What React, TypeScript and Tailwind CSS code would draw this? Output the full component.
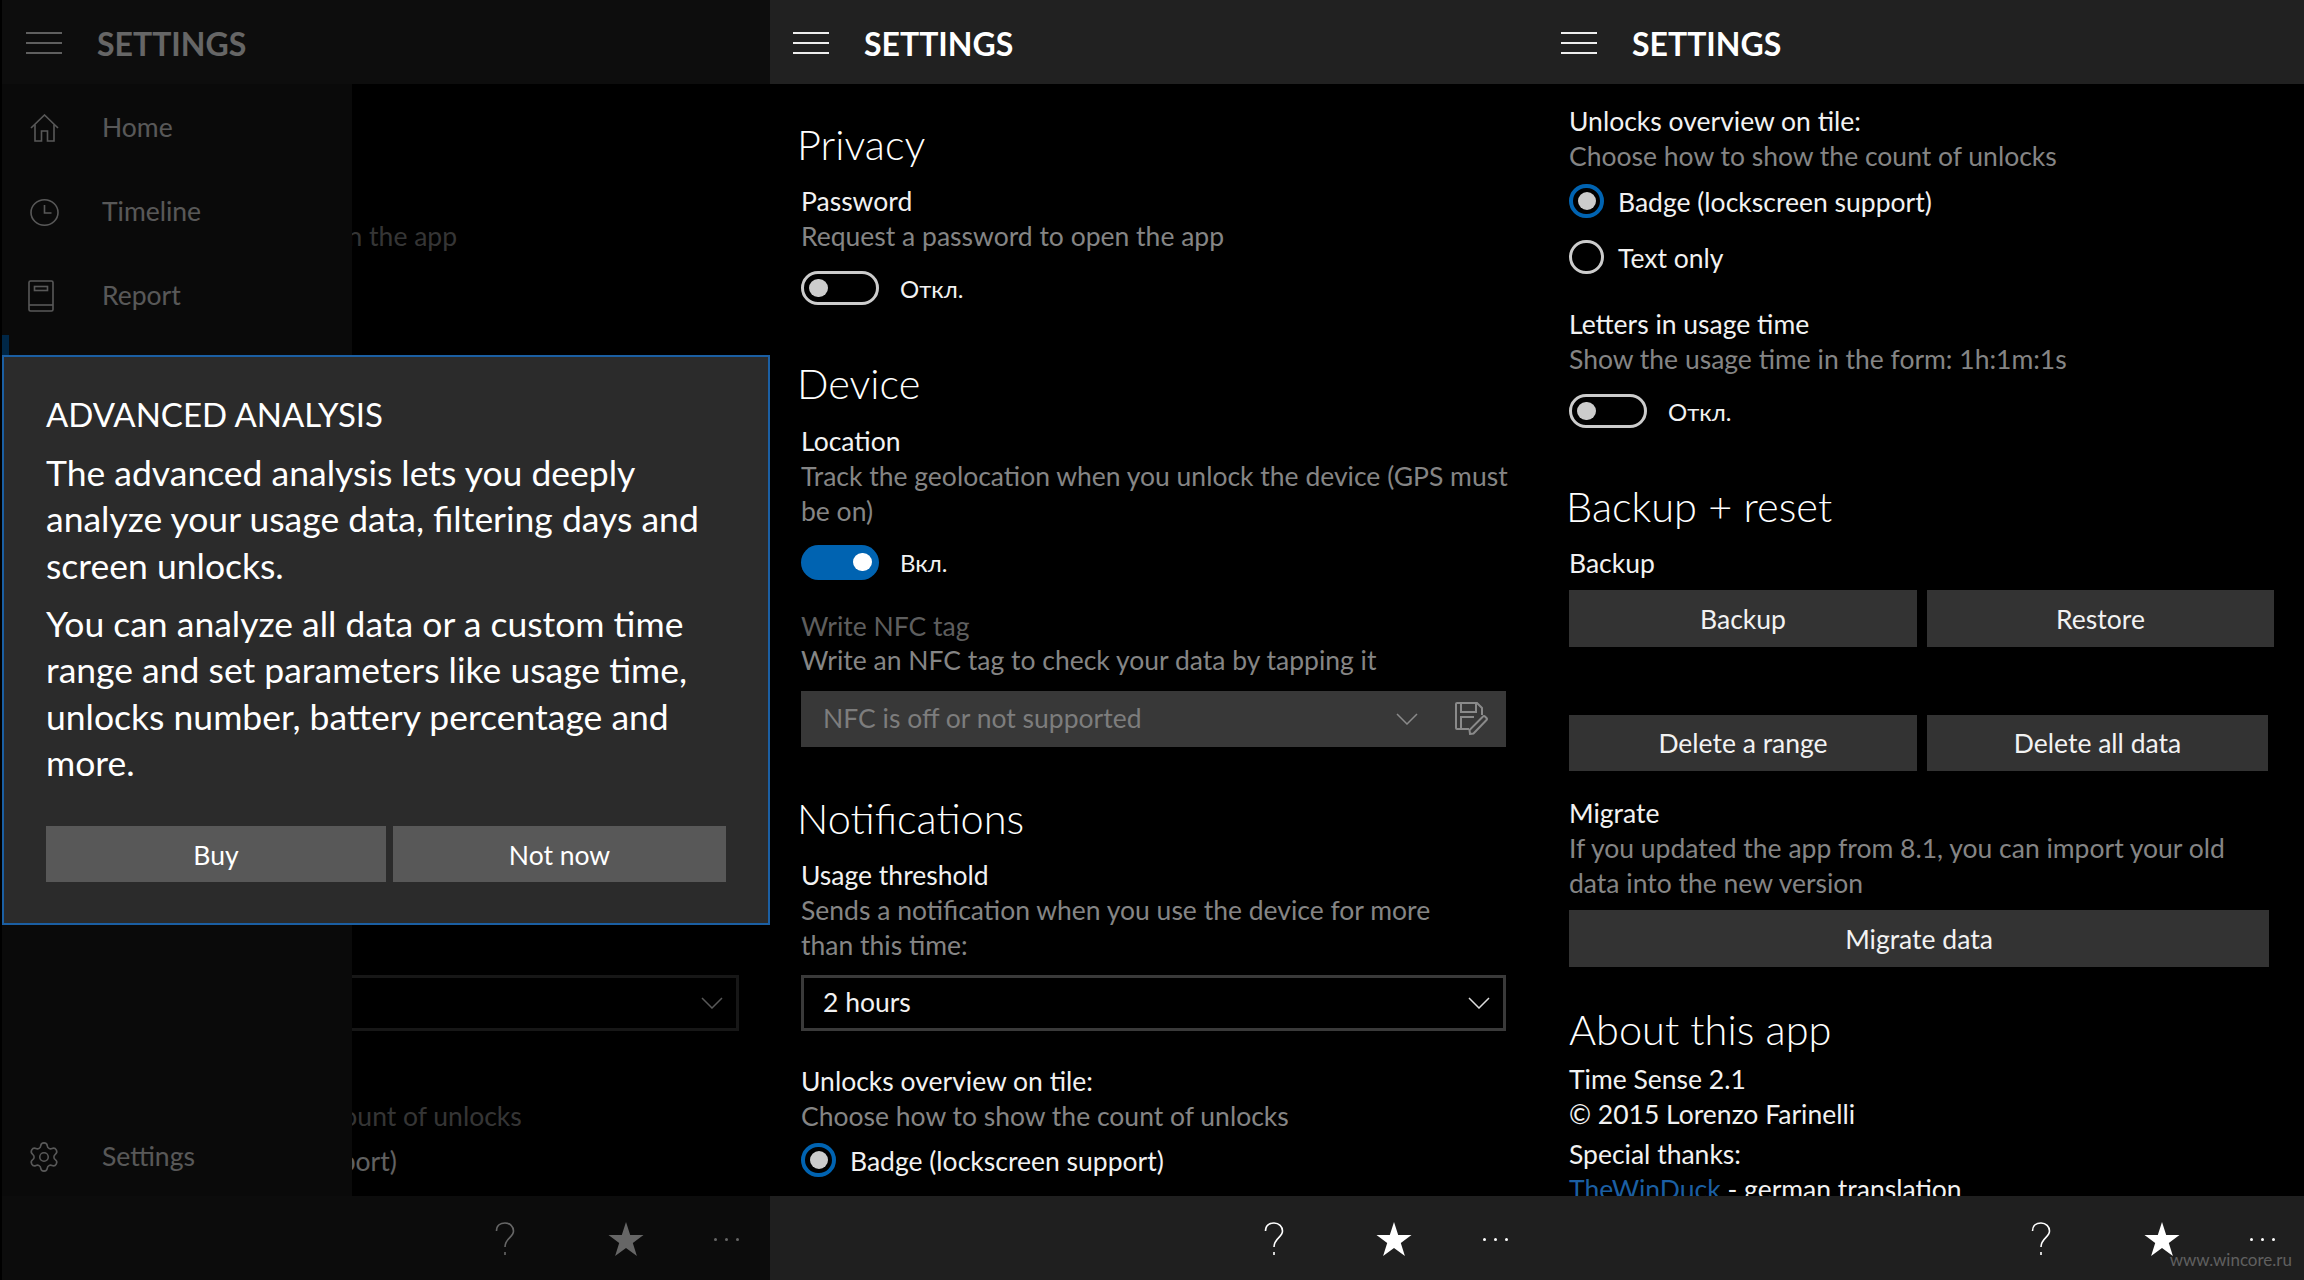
import React from "react";
import { Settings as Gear } from "lucide-react";

const Heading = ({ children, cls = "-ml-[4px]" }: { children: React.ReactNode; cls?: string }) => (
  <div className={`h-[50px] leading-[46px] text-[41.5px] font-light text-white whitespace-nowrap ${cls}`}>{children}</div>
);
const Label = ({ children, cls = "text-[#f2f2f2]" }: { children: React.ReactNode; cls?: string }) => (
  <div className={`h-[35px] leading-[35px] text-[26.5px] whitespace-nowrap ${cls}`}>{children}</div>
);
const Desc = ({ children }: { children: React.ReactNode }) => (
  <div className="h-[35px] leading-[35px] text-[26.5px] text-[#858585] whitespace-nowrap">{children}</div>
);

const Toggle = ({ on, cls }: { on?: boolean; cls: string }) => (
  <div className={`flex items-center gap-[21px] h-[34px] ${cls}`}>
    {on ? (
      <div className="w-[78px] h-[35px] rounded-full bg-[#0063b1] flex items-center justify-end pr-[7px]">
        <div className="w-[19px] h-[18px] rounded-full bg-white" />
      </div>
    ) : (
      <div className="w-[78px] h-[34px] rounded-full border-[3px] border-[#cccccc] flex items-center pl-[5px]">
        <div className="w-[19px] h-[18px] rounded-full bg-[#cccccc]" />
      </div>
    )}
    <span className="mt-[2px] text-[24px] text-[#f2f2f2] leading-[34px]">{on ? "Вкл." : "Откл."}</span>
  </div>
);

const Radio = ({ on, label, cls }: { on?: boolean; label: string; cls: string }) => (
  <div className={`flex items-center gap-[14px] h-[34px] ${cls}`}>
    {on ? (
      <div className="w-[35px] h-[34px] rounded-full border-[4px] border-[#0063b1] flex items-center justify-center">
        <div className="w-[18px] h-[18px] rounded-full bg-[#cccccc]" />
      </div>
    ) : (
      <div className="w-[35px] h-[34px] rounded-full border-[3px] border-[#cccccc]" />
    )}
    <span className="mt-[2px] text-[26.5px] text-[#f2f2f2] leading-[34px] whitespace-nowrap">{label}</span>
  </div>
);

const Chevron = ({ color }: { color: string }) => (
  <svg width="22" height="12" viewBox="0 0 22 12" fill="none" stroke={color} strokeWidth="1.5">
    <path d="M1 1 L11 11 L21 1" />
  </svg>
);

const Btn = ({ children, cls }: { children: React.ReactNode; cls: string }) => (
  <div className={`flex items-center justify-center pt-[2px] bg-[#333333] text-[26.5px] text-[#f2f2f2] ${cls}`}>{children}</div>
);

const Header = ({ cls }: { cls: string }) => (
  <div className="h-[84px] shrink-0 bg-[#212121] flex items-center">
    <div className={`flex flex-col gap-[8px] mt-[2px] w-[36px] ${cls}`}>
      <div className="h-[2px] bg-[#eeeeee]" />
      <div className="h-[2px] bg-[#eeeeee]" />
      <div className="h-[2px] bg-[#eeeeee]" />
    </div>
    <div className="ml-[35px] mt-[3px] text-[32px] font-bold text-white leading-none">SETTINGS</div>
  </div>
);

const Question = () => (
  <svg width="20" height="34" viewBox="0 0 20 34" fill="none" stroke="white" strokeWidth="1.6">
    <path d="M1.5 9 C1.5 3.5 5.5 1 10 1 C15 1 18.5 4.5 18.5 9 C18.5 15.5 10 16 10 25 M10 30 V33" />
  </svg>
);

const Footer = ({ cls }: { cls: string }) => (
  <div className={`h-[84px] shrink-0 bg-[#1f1f1f] flex items-center ${cls}`}>
    <div className="w-[40px] flex justify-center mt-[2px]">
      <Question />
    </div>
    <div className="w-[50px] ml-[75.5px] flex justify-center mt-[2px]">
      <svg width="36" height="34" viewBox="0 0 36 34" fill="white">
        <polygon points="18,0 22.2,12.9 35.5,12.9 24.8,21 28.9,34 18,26 7.1,34 11.2,21 0.5,12.9 13.8,12.9" />
      </svg>
    </div>
    <div className="w-[40px] ml-[56px] flex justify-center gap-[8px] mt-[2px]">
      <div className="w-[3px] h-[3px] rounded-full bg-white" />
      <div className="w-[3px] h-[3px] rounded-full bg-white" />
      <div className="w-[3px] h-[3px] rounded-full bg-white" />
    </div>
  </div>
);

const PrivacyBody = ({ cls }: { cls: string }) => (
  <div className={`flex-1 overflow-hidden pt-[37px] ${cls}`}>
    <Heading>Privacy</Heading>
    <div className="mt-[13px]">
      <Label>Password</Label>
      <Desc>Request a password to open the app</Desc>
    </div>
    <Toggle cls="mt-[17px]" />
    <Heading cls="-ml-[4px] mt-[55px]">Device</Heading>
    <div className="mt-[14px]">
      <Label>Location</Label>
      <Desc>Track the geolocation when you unlock the device (GPS must</Desc>
      <Desc>be on)</Desc>
    </div>
    <Toggle on cls="mt-[16px]" />
    <div className="mt-[30px]">
      <Label cls="text-[#5e5e5e]">Write NFC tag</Label>
      <div className="-mt-[1px]">
        <Desc>Write an NFC tag to check your data by tapping it</Desc>
      </div>
    </div>
    <div className="mt-[13px] h-[56px] bg-[#383838] flex items-center pl-[22px]">
      <span className="text-[26.5px] text-[#7d7d7d] flex-1 whitespace-nowrap">NFC is off or not supported</span>
      <Chevron color="#8a8a8a" />
      <div className="w-[70px] h-[57px] -mt-[1px] flex items-center justify-center ml-[18px]">
        <svg width="33" height="33" viewBox="0 0 33 33" fill="none" stroke="#8a8a8a" strokeWidth="2">
          <path d="M14 27 H2 Q1 27 1 26 V2 Q1 1 2 1 H22 L27 6 V13" />
          <path d="M6 1 V10 H21 V1" />
          <path d="M6 27 V15 H19" />
          <path d="M15 32 L14.5 28 L28 14.5 Q29 13.5 30 14.5 L31.5 16 Q32.5 17 31.5 18 L18.5 31.5 Z" />
        </svg>
      </div>
    </div>
    <Heading cls="-ml-[4px] mt-[48px]">Notifications</Heading>
    <div className="mt-[13px]">
      <Label>Usage threshold</Label>
      <Desc>Sends a notification when you use the device for more</Desc>
      <Desc>than this time:</Desc>
    </div>
    <div className="mt-[12px] h-[56px] border-[3px] border-[#3a3a3a] flex items-center justify-between pl-[19px] pr-[13px]">
      <span className="text-[26.5px] text-[#f2f2f2]">2 hours</span>
      <Chevron color="#dddddd" />
    </div>
    <div className="mt-[33px]">
      <Label>Unlocks overview on tile:</Label>
      <Desc>Choose how to show the count of unlocks</Desc>
    </div>
    <Radio on label="Badge (lockscreen support)" cls="mt-[9px]" />
  </div>
);

const NavItem = ({ icon, label, cls }: { icon: React.ReactNode; label: string; cls: string }) => (
  <div className={`flex items-center h-[40px] ${cls}`}>
    <div className="w-[84px] flex justify-center">{icon}</div>
    <span className="ml-[16px] text-[26.5px] text-[#dddddd]">{label}</span>
  </div>
);

export default function App() {
  return (
    <div className="w-[2304px] h-[1280px] overflow-hidden bg-black flex pl-[2px] font-['Lato','Open_Sans',sans-serif]">
      {/* Panel 1 */}
      <div className="w-[768px] h-full flex flex-col relative overflow-hidden">
        <Header cls="ml-[24px]" />
        <PrivacyBody cls="pl-[32px] pr-[31px]" />
        <Footer cls="pl-[483px]" />
        <div className="absolute left-0 top-[84px] w-[350px] h-[1112px] bg-[#1b1b1b] flex flex-col">
          <NavItem
            cls="mt-[24px]"
            label="Home"
            icon={
              <svg width="29" height="28" viewBox="0 0 29 28" fill="none" stroke="#dddddd" strokeWidth="1.6">
                <path d="M1 14 L14.5 1 L28 14" />
                <path d="M5 10.5 V27 H11.5 V17 H17.5 V27 H24 V10.5" />
              </svg>
            }
          />
          <NavItem
            cls="mt-[44px]"
            label="Timeline"
            icon={
              <svg width="29" height="27" viewBox="0 0 29 27" fill="none" stroke="#dddddd" strokeWidth="1.6">
                <ellipse cx="14.5" cy="13.5" rx="13.5" ry="12.7" />
                <path d="M14.5 6 V14 H21.5" />
              </svg>
            }
          />
          <NavItem
            cls="mt-[44px]"
            label="Report"
            icon={
              <svg width="26" height="32" viewBox="0 0 26 32" fill="none" stroke="#dddddd" strokeWidth="1.6" className="-ml-[6px]">
                <rect x="1" y="1" width="24" height="30" rx="1.5" />
                <path d="M1 25 H25" />
                <rect x="6.5" y="6.5" width="13" height="4" />
              </svg>
            }
          />
          <div className="absolute left-0 top-[251px] w-[7px] h-[30px] bg-[#0063b1]" />
          <div className="mt-auto mb-[19px]">
            <NavItem
              cls=""
              label="Settings"
              icon={<Gear size={34} strokeWidth={1.1} color="#dddddd" />}
            />
          </div>
        </div>
        <div className="absolute inset-0 bg-black/60" />
        <div className="absolute left-0 top-[355px] w-[768px] h-[570px] bg-[#2b2b2b] border-2 border-[#1b5fa3] pl-[42px] text-white">
          <div className="mt-[32px] h-[50px] leading-[50px] text-[33px] whitespace-nowrap">ADVANCED ANALYSIS</div>
          <div className="mt-[11px] text-[35.5px] leading-[46.4px] whitespace-nowrap">
            The advanced analysis lets you deeply
            <br />
            analyze your usage data, filtering days and
            <br />
            screen unlocks.
          </div>
          <div className="mt-[12px] text-[35.5px] leading-[46.2px] whitespace-nowrap">
            You can analyze all data or a custom time
            <br />
            range and set parameters like usage time,
            <br />
            unlocks number, battery percentage and
            <br />
            more.
          </div>
          <div className="flex gap-[7px] mt-[40px]">
            <div className="w-[340px] h-[56px] pt-[4px] bg-[#585858] flex items-center justify-center text-[26.5px]">Buy</div>
            <div className="w-[333px] h-[56px] pt-[4px] bg-[#585858] flex items-center justify-center text-[26.5px]">Not now</div>
          </div>
        </div>
      </div>

      {/* Panel 2 */}
      <div className="w-[764px] h-full flex flex-col">
        <Header cls="ml-[23px]" />
        <PrivacyBody cls="pl-[31px] pr-[28px]" />
        <Footer cls="pl-[483.5px]" />
      </div>

      {/* Panel 3 */}
      <div className="w-[770px] h-full flex flex-col relative">
        <Header cls="ml-[27px]" />
        <div className="flex-1 overflow-hidden pt-[20px] pl-[35px]">
          <Label>Unlocks overview on tile:</Label>
          <Desc>Choose how to show the count of unlocks</Desc>
          <Radio on label="Badge (lockscreen support)" cls="mt-[10px]" />
          <Radio label="Text only" cls="mt-[22px]" />
          <div className="mt-[33px]">
            <Label>Letters in usage time</Label>
            <Desc>Show the usage time in the form: 1h:1m:1s</Desc>
          </div>
          <Toggle cls="mt-[17px]" />
          <Heading cls="-ml-[3px] mt-[55px]">Backup + reset</Heading>
          <div className="mt-[13px]">
            <Label>Backup</Label>
          </div>
          <div className="mt-[9px] flex gap-[10px]">
            <Btn cls="w-[348px] h-[57px]">Backup</Btn>
            <Btn cls="w-[347px] h-[57px]">Restore</Btn>
          </div>
          <div className="mt-[68px] flex gap-[10px]">
            <Btn cls="w-[348px] h-[56px]">Delete a range</Btn>
            <Btn cls="w-[341px] h-[56px]">Delete all data</Btn>
          </div>
          <div className="mt-[25px]">
            <Label>Migrate</Label>
            <Desc>If you updated the app from 8.1, you can import your old</Desc>
            <Desc>data into the new version</Desc>
          </div>
          <Btn cls="mt-[9px] w-[700px] h-[57px]">Migrate data</Btn>
          <Heading cls="mt-[39px]">About this app</Heading>
          <div className="mt-[6px]">
            <Label>Time Sense 2.1</Label>
            <Label>© 2015 Lorenzo Farinelli</Label>
          </div>
          <div className="mt-[5px]">
            <Label>Special thanks:</Label>
            <Label>
              <span className="text-[#1b5fa3]">TheWinDuck</span> - german translation
            </Label>
          </div>
        </div>
        <Footer cls="pl-[487px]" />
        <div className="absolute right-[12px] bottom-[7px] text-[17px] leading-[26px] text-[#606060] whitespace-nowrap">www.wincore.ru</div>
      </div>
    </div>
  );
}
